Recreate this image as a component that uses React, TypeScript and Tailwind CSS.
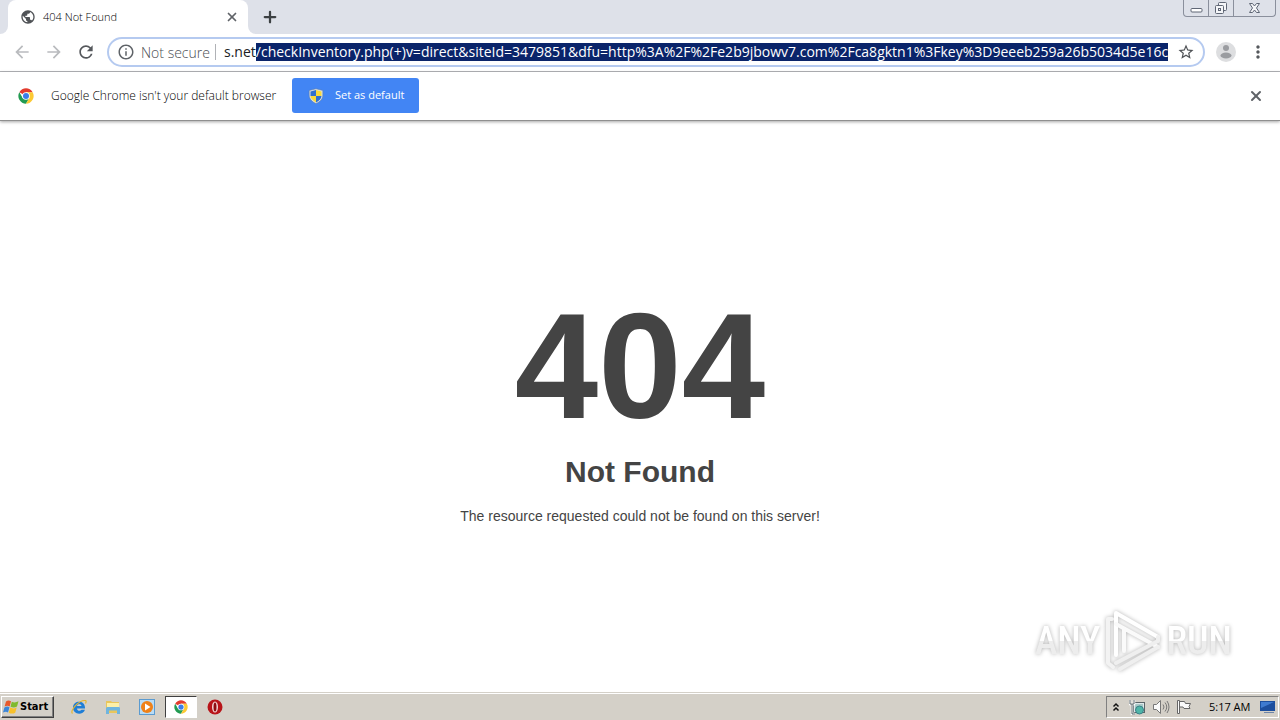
import { useEffect, useRef } from "react";
import type { ReactNode } from "react";
import { Plus, X } from "lucide-react";
import {
  MdArrowBack,
  MdArrowForward,
  MdInfoOutline,
  MdMoreVert,
  MdPublic,
  MdRefresh,
  MdStarBorder,
} from "react-icons/md";

const host = "s.net";
const path =
  "/checkInventory.php(+)v=direct&siteId=3479851&dfu=http%3A%2F%2Fe2b9jbowv7.com%2Fca8gktn1%3Fkey%3D9eeeb259a26b5034d5e16c";

function ChromeLogo({ className }: { className: string }) {
  return (
    <svg viewBox="0 0 48 48" className={className} aria-hidden="true">
      <path d="M24 24 4.1 12.5A23 23 0 0 1 43.9 12.5H24Z" fill="#e33b2e" />
      <path d="M14 29.8 4.1 12.5A23 23 0 0 0 24 47L34 29.8Z" fill="#229b52" />
      <path d="M24 12.5H43.9A23 23 0 0 1 24 47L34 29.8Z" fill="#fcc934" />
      <circle cx="24" cy="24" r="11.5" fill="#fff" />
      <circle cx="24" cy="24" r="9" fill="#3b7de8" />
    </svg>
  );
}

function ShieldIcon() {
  return (
    <svg viewBox="0 0 16 16" className="size-4" aria-hidden="true">
      <path d="M8 .8 14.8 2.5V7c0 4-2.500 6.800-6.800 8.500C4 13.800 1.200 11 1.200 7V2.500Z" fill="#dfe3e8" stroke="#5d7898" strokeWidth=".5" />
      <path d="M8 2v6H2.500V3.500Z" fill="#2f6fd0" />
      <path d="M8 2v6h5.500V3.500Z" fill="#f8d93c" />
      <path d="M8 8v6.500C5 12.500 2.700 10.800 2.500 8Z" fill="#f8d93c" />
      <path d="M8 8v6.500c3-1.500 5.300-3.700 5.500-6.500Z" fill="#2f6fd0" />
    </svg>
  );
}

function WindowControls() {
  return (
    <div className="flex h-[17px] overflow-hidden rounded-b border border-t-0 border-[#8a8f9c] text-[#5f6675]">
      <button aria-label="Minimize" className="flex w-[25px] justify-center border-r border-[#8a8f9c]">
        <svg viewBox="0 0 13 16" className="h-4 w-[13px]" fill="#fff" stroke="currentColor">
          <rect x="1" y="8.500" width="11" height="3.500" rx="1" />
        </svg>
      </button>
      <button aria-label="Restore" className="flex w-[25px] justify-center border-r border-[#8a8f9c]">
        <svg viewBox="0 0 14 16" className="h-4 w-[14px]" fill="#f4f5f8" stroke="currentColor">
          <rect x="4.500" y="2.500" width="8" height="8" rx="1" />
          <rect x="1.500" y="5.500" width="8" height="8" rx="1" />
          <rect x="4.500" y="8.500" width="2" height="2" />
        </svg>
      </button>
      <button aria-label="Close" className="flex w-[41px] justify-center">
        <svg viewBox="0 0 13 16" className="h-4 w-[13px]" fill="#f4f5f8" stroke="currentColor">
          <path d="M1.500 3.500h3l2 2.500 2-2.500h3L8.500 8l3 4.500h-3l-2-2.500-2 2.500h-3L4.500 8Z" />
        </svg>
      </button>
    </div>
  );
}

function TabStrip() {
  return (
    <div className="flex h-[34px] bg-white">
      <div className="w-2 rounded-br-lg bg-[#dee1e9]" />
      <div className="w-60 bg-linear-to-b from-[#dee1e9] from-50% to-white to-50%">
        <div className="flex h-full items-center rounded-t-lg bg-white pr-2 pl-3">
          <MdPublic className="size-4 text-[#505357]" />
          <span className="ml-[7px] flex-1 text-[11px] font-light text-black">404 Not Found</span>
          <button aria-label="Close tab" className="flex size-4 items-center justify-center">
            <X className="size-[14px] text-[#5f6368]" strokeWidth={3} />
          </button>
        </div>
      </div>
      <div className="flex flex-1 items-start justify-between rounded-bl-lg bg-[#dee1e9] pr-1 pl-3">
        <button aria-label="New tab" className="flex h-[34px] w-5 items-center justify-center">
          <Plus className="size-[18px] text-[#3c4043]" strokeWidth={3} />
        </button>
        <WindowControls />
      </div>
    </div>
  );
}

function ToolbarButton({ label, children }: { label: string; children: ReactNode }) {
  return (
    <button aria-label={label} className="flex h-[30px] w-8 shrink-0 items-center justify-center">
      {children}
    </button>
  );
}

function Toolbar() {
  const inputRef = useRef<HTMLInputElement>(null);

  useEffect(() => {
    inputRef.current?.focus();
    inputRef.current?.setSelectionRange(host.length, host.length + path.length);
    if (inputRef.current) inputRef.current.scrollLeft = 0;
  }, []);

  return (
    <div className="flex h-[38px] items-start border-b border-[#b4b5b9] bg-white px-[6px] pt-[3px]">
      <ToolbarButton label="Back">
        <MdArrowBack className="size-5 text-[#b9bbbe]" />
      </ToolbarButton>
      <ToolbarButton label="Forward">
        <MdArrowForward className="size-5 text-[#b9bbbe]" />
      </ToolbarButton>
      <ToolbarButton label="Reload">
        <MdRefresh className="size-5 text-[#55585c]" />
      </ToolbarButton>
      <div className="mx-[5px] flex h-[30px] min-w-0 flex-1 items-center rounded-full border-2 border-[#b5caf0] pr-2 pl-2">
        <MdInfoOutline className="size-[18px] shrink-0 text-[#5f6368]" />
        <label htmlFor="address" className="ml-[6px] w-[74px] shrink-0 text-[14px] font-light text-[#4b4e53]">
          Not secure
        </label>
        <div className="mr-2 h-4 w-px shrink-0 bg-[#b0b2b6]" />
        <input
          id="address"
          ref={inputRef}
          defaultValue={host + path}
          spellCheck={false}
          className="mr-2 h-[18px] min-w-0 flex-1 text-[14px] leading-[18px] text-[#202124] outline-none selection:bg-[#0a246a] selection:text-white"
        />
        <button aria-label="Bookmark this page" className="shrink-0">
          <MdStarBorder className="size-[18px] text-[#4f5256]" />
        </button>
      </div>
      <ToolbarButton label="Profile">
        <svg viewBox="0 0 20 20" className="size-5">
          <circle cx="10" cy="10" r="10" fill="#dddee0" />
          <circle cx="10" cy="6" r="3" fill="#9a9ca0" />
          <ellipse cx="10" cy="13.500" rx="5.500" ry="3" fill="#9a9ca0" />
        </svg>
      </ToolbarButton>
      <ToolbarButton label="Menu">
        <MdMoreVert className="size-5 text-[#55585c]" />
      </ToolbarButton>
    </div>
  );
}

function DefaultBrowserBar() {
  return (
    <div className="flex h-[49px] items-center border-b border-[#8f8f8f] bg-white pr-4 pb-px pl-[18px] shadow-[0_1px_3px_rgba(0,0,0,0.35)]">
      <ChromeLogo className="size-4" />
      <span className="ml-[17px] w-[241px] shrink-0 text-[12px] font-light text-black">
        Google Chrome isn't your default browser
      </span>
      <button className="flex h-[35px] w-[127px] items-center rounded-[3px] bg-[#4285f4] pl-4 text-[11px] text-white">
        <ShieldIcon />
        <span className="ml-[11px]">Set as default</span>
      </button>
      <button aria-label="Dismiss" className="ml-auto">
        <X className="size-4 text-[#5f6368]" strokeWidth={3} />
      </button>
    </div>
  );
}

function Watermark() {
  return (
    <div className="absolute right-12 bottom-5 flex h-16 items-center gap-1 font-['Roboto_Condensed','Liberation_Sans',sans-serif] text-[38px] leading-10 font-medium drop-shadow-[0_0_2px_rgba(0,0,0,0.3)]">
      <span className="bg-linear-to-b from-white from-50% to-[#ededed] to-50% bg-clip-text text-transparent">ANY</span>
      <svg viewBox="0 0 58 64" className="h-16 w-[58px]" fill="none" strokeWidth="4" strokeLinejoin="round" strokeLinecap="round">
        <path d="M8 10H4V54l5 4" stroke="#f3f3f3" />
        <path d="M12 46V4L54 28" stroke="#fff" />
        <path d="M12 15 54 38M20 42V20" stroke="#fafafa" />
        <path d="M54 28v4L12 54M54 38 16 60" stroke="#efefef" />
      </svg>
      <span className="bg-linear-to-b from-white from-50% to-[#ededed] to-50% bg-clip-text text-transparent">RUN</span>
    </div>
  );
}

function StartFlag() {
  return (
    <svg viewBox="0 0 16 16" className="size-4" aria-hidden="true">
      <path d="M3 2.500c2-1.500 3.500-1 5-.2L6.700 7.400C5 6.500 3.500 6.500 1.600 7.600Z" fill="#e8592b" />
      <path d="M8.800 2.700c2 1 4 1 6.700-.4L14 7.600c-2.200 1.200-4.300 1.200-6.500.1Z" fill="#7fba2f" />
      <path d="M1.400 8.500c2-1.200 3.500-1.200 5.100-.3L5 13.400c-1.500-.9-3-.9-5 .2Z" fill="#3c86d8" />
      <path d="M7.200 8.600c2.200 1.100 4.300 1 6.500-.1l-1.500 5.200c-2 1.200-4.300 1.200-6.500 0Z" fill="#f8c12c" />
    </svg>
  );
}

function QuickLaunch({ label, active, children }: { label: string; active?: boolean; children: ReactNode }) {
  return (
    <button
      aria-label={label}
      className={`${
        active ? "border border-t-[#404040] border-r-white border-b-white border-l-[#404040] bg-white" : ""
      } flex h-[22px] w-8 items-center justify-center`}
    >
      {children}
    </button>
  );
}

function Taskbar() {
  return (
    <div className="flex h-[27px] items-center border-t border-white bg-[#d4d0c8] px-[1px] shadow-[0_-1px_0_#d4d0c8]">
      <button className="flex h-[22px] w-[53px] items-center gap-[1px] border border-t-white border-r-[#404040] border-b-[#404040] border-l-white pl-[1px] font-['DejaVu_Sans_Condensed','DejaVu_Sans',sans-serif] text-[11px] font-bold text-black shadow-[inset_-1px_-1px_0_#808080]">
        <StartFlag />
        Start
      </button>
      <div className="ml-[9px] flex gap-[2px]">
        <QuickLaunch label="Internet Explorer">
          <svg viewBox="0 0 16 16" className="size-4">
            <path d="M14 9.500H6c.2 2.700 3.400 3 4.500 1.200H14C12 16.500 2 16 2 8.500 2 1 14.500.5 14 9.500ZM6 7h4.500C10.200 4.600 6.400 4.600 6 7Z" fill="#1f7ed6" fillRule="evenodd" />
            <path d="M1.500 14.500C-1 12 7 1 14.500 1.500c1 .5.500 2 0 3" fill="none" stroke="#e6b52c" strokeWidth="1.200" />
          </svg>
        </QuickLaunch>
        <QuickLaunch label="Windows Explorer">
          <svg viewBox="0 0 16 16" className="size-4">
            <path d="M1 2h5l1 1h7v11H1Z" fill="#e9c65c" />
            <path d="M2 4h12v5H2Z" fill="#fdf0a8" />
            <path d="M1 15V9.500C1 8.500 2 8 3 8h10.500c1 0 1.500.5 1.500 1.500V15h-3v-3.500H4V15Z" fill="#6fb5df" />
          </svg>
        </QuickLaunch>
        <QuickLaunch label="Media Player">
          <svg viewBox="0 0 16 16" className="size-4">
            <rect x=".5" y=".5" width="15" height="15" fill="#b9dcf5" stroke="#5b9bd0" />
            <circle cx="8" cy="8" r="6" fill="#ef8118" />
            <path d="M6 4.500 11.500 8 6 11.500Z" fill="#fff" />
          </svg>
        </QuickLaunch>
        <QuickLaunch label="Google Chrome" active>
          <ChromeLogo className="size-[14px]" />
        </QuickLaunch>
        <QuickLaunch label="Opera">
          <svg viewBox="0 0 16 16" className="size-4">
            <circle cx="8" cy="8" r="7.500" fill="#b81419" />
            <ellipse cx="8" cy="8" rx="3" ry="5.500" fill="#f4d9d9" />
            <ellipse cx="8" cy="8" rx="1.500" ry="4.500" fill="#8e0d11" />
          </svg>
        </QuickLaunch>
      </div>
      <div className="ml-auto flex h-[22px] items-center border border-t-[#808080] border-r-white border-b-white border-l-[#808080] pl-[3px]">
        <button aria-label="Show hidden icons" className="flex w-3 justify-center">
          <svg viewBox="0 0 8 10" className="h-[10px] w-2" fill="none" stroke="#111" strokeWidth="1.500">
            <path d="M1.500 4.500 4 2l2.500 2.500M1.500 8.500 4 6l2.500 2.500" />
          </svg>
        </button>
        <svg viewBox="0 0 16 16" className="ml-[7px] size-4" fill="none" stroke="#5a6468">
          <rect x="4.500" y="3.500" width="11" height="10" fill="#dfe8ea" />
          <rect x="6" y="5" width="8" height="7" fill="#a9c9c8" stroke="none" />
          <circle cx="10.500" cy="11" r="4" fill="#4fb5a8" stroke="#3a7f86" />
          <path d="M1 1v4h4V1M3 5v10h3" stroke="#fff" strokeWidth="2.500" />
          <path d="M1 1v4h4V1M3 5v10h3" />
        </svg>
        <svg viewBox="0 0 18 16" className="ml-[7px] h-4 w-[18px]" fill="none" stroke="#777">
          <path d="M1.500 5.500h3L8.500 1.500v13l-4-4h-3Z" fill="#fafafa" />
          <path d="M11 5.500q2 2.500 0 5M13 3.500q3.500 4.500 0 9M15 2q4 6 0 12" />
        </svg>
        <svg viewBox="0 0 16 16" className="ml-[6px] size-4" fill="#fafafa" stroke="#666">
          <path d="M2.500 2.500h6l1 2h5l-1.500 3 1 2h-6l-1-1.500H3.500Z" />
          <path d="M1.500 1.500h2v13h-2Z" />
        </svg>
        <time className="ml-[17px] w-[51px] text-[11px] whitespace-nowrap text-black">5:17 AM</time>
        <svg viewBox="0 0 16 16" className="mr-[2px] size-4" aria-hidden="true">
          <path d="M0 2h15v10H0Z" fill="#1d4f9e" />
          <path d="M1 3h13L1 9Z" fill="#3f7bd0" />
          <path d="M4 13h10v1H4Z" fill="#6e85a8" />
        </svg>
      </div>
    </div>
  );
}

function App() {
  return (
    <div className="flex min-h-screen flex-col bg-white font-['Open_Sans','Noto_Sans',sans-serif]">
      <header className="relative">
        <TabStrip />
        <Toolbar />
        <DefaultBrowserBar />
      </header>
      <main className="relative flex-1 pt-[170px] text-center font-['Liberation_Sans',Arial,sans-serif] text-[#444]">
        <h1 className="text-[150px] leading-[150px] font-bold">404</h1>
        <h2 className="mt-[21px] text-[30px] leading-5 font-bold">Not Found</h2>
        <p className="mt-6 text-[14px] leading-5">The resource requested could not be found on this server!</p>
        <Watermark />
      </main>
      <Taskbar />
    </div>
  );
}

export default App;
